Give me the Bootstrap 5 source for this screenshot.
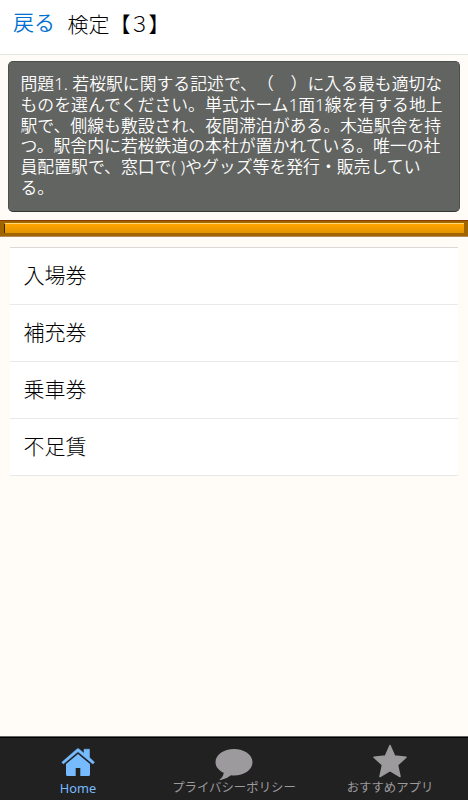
<!DOCTYPE html>
<html lang="ja">
<head>
<meta charset="utf-8">
<meta name="viewport" content="width=device-width, initial-scale=1">
<title>検定【３】</title>
<link href="https://cdn.jsdelivr.net/npm/bootstrap@5.3.0/dist/css/bootstrap.min.css" rel="stylesheet">
<style>
body{font-family:"Noto Sans","Noto Sans CJK JP",sans-serif;background:#fffbf6;color:#000;text-spacing-trim:space-all}
.top-bar{height:55px;border-bottom:1px solid #e4e4e4;font-size:21px;line-height:30px;font-weight:300;padding-left:13px;gap:12.5px}
.top-bar a{color:#0070d0;margin-top:7px;line-height:30px;font-weight:350}
.top-bar h1{font-size:21px;line-height:30px;font-weight:300;margin-top:9px}
.top-bar h1 span{letter-spacing:-1.5px}
.question{margin:6px 8px 0;height:151px;padding:12px 11.5px;background:#626461;border:1px solid #4b504d;border-bottom-color:#303735;border-radius:5px;color:#fff;font-size:16.85px;line-height:20.8px;font-weight:350}
.gauge{margin-top:8px;height:17px;padding:3px 4px 4px;background:#a06400;border-top:1px solid #8b3c00;border-bottom:1px solid #b98a58}
.gauge-fill{height:9px;margin-top:-1px;background:linear-gradient(#ffa500,#e29400);border-top:1px solid #ffd877;border-left:1px solid #3a2700;box-sizing:content-box}
.answers{margin:10px 10px 0;--bs-list-group-bg:#fff}
.answers .list-group-item{height:57px;padding:11.5px 14px 0 13.5px;font-size:21px;line-height:30px;font-weight:300;color:#000;border:0;border-bottom:1px solid #e9e9e9}
.answers .list-group-item:first-child{height:58px;border-top:1px solid #d9d9d9}
.tabs{height:64px;background:#212121;border-top:1px solid #666;box-shadow:inset 0 1px #000}
.tabs a{color:#9d9a9d;font-size:12.4px;line-height:16px;padding-top:7px;font-weight:400}
.tabs a.active{color:#76bbff;font-size:12.8px}
.tabs svg{width:40px;height:36px}
</style>
<script src="https://cdn.jsdelivr.net/npm/bootstrap@5.3.0/dist/js/bootstrap.bundle.min.js"></script>
</head>
<body class="d-flex flex-column vh-100 overflow-hidden">
<header class="top-bar d-flex align-items-start bg-white flex-shrink-0">
<a href="#" class="text-decoration-none">戻る</a>
<h1 class="mb-0">検定<span>【３】</span></h1>
</header>
<main class="flex-grow-1">
<div class="question text-nowrap">問題1. 若桜駅に関する記述で、（　）に入る最も適切な<br>ものを選んでください。単式ホーム1面1線を有する地上<br>駅で、側線も敷設され、夜間滞泊がある。木造駅舎を持<br>つ。駅舎内に若桜鉄道の本社が置かれている。唯一の社<br>員配置駅で、窓口で( )やグッズ等を発行・販売してい<br>る。</div>
<div class="gauge"><div class="gauge-fill"></div></div>
<div class="answers list-group rounded-0">
<a href="#" class="list-group-item">入場券</a>
<a href="#" class="list-group-item">補充券</a>
<a href="#" class="list-group-item">乗車券</a>
<a href="#" class="list-group-item">不足賃</a>
</div>
</main>
<nav class="tabs row g-0 flex-shrink-0 text-center">
<a href="#" class="col active d-flex flex-column align-items-center text-decoration-none">
<svg viewBox="0 0 40 36" fill="currentColor"><path d="M3.800 18.200 19 5q1-.8 2 0l5 4.300V5.200h5.500v8.300l5 4.700-1.600 1.800L20 7.700 5.300 20Z" stroke="currentColor" stroke-width=".5" stroke-linejoin="round"/><path d="M20 10 32 20V30.500q0 1.500-1.500 1.500H22.300V24h-4.600v8H9.500Q8 32 8 30.500V20Z"/></svg>
<span>Home</span></a>
<a href="#" class="col d-flex flex-column align-items-center text-decoration-none">
<svg viewBox="0 0 40 36" fill="currentColor"><path d="M20 5c10.200 0 18.500 5.800 18.500 13.200S30.200 31.500 20 31.500q-1.600 0-3-.3Q11.500 35.800 5 36.200q4.500-3.300 4.700-7.400C4.700 26.400 1.500 22.600 1.500 18.200 1.500 10.800 9.800 5 20 5Z"/></svg>
<span>プライバシーポリシー</span></a>
<a href="#" class="col d-flex flex-column align-items-center text-decoration-none">
<svg viewBox="0 0 40 36" fill="currentColor"><path d="M20 1.500 24.600 12 36 13.300 27.500 21 30 32.500 20 26.700 10 32.500 12.500 21 4 13.300 15.400 12Z" stroke="currentColor" stroke-width="1.500" stroke-linejoin="round"/></svg>
<span>おすすめアプリ</span></a>
</nav>
</body>
</html>
